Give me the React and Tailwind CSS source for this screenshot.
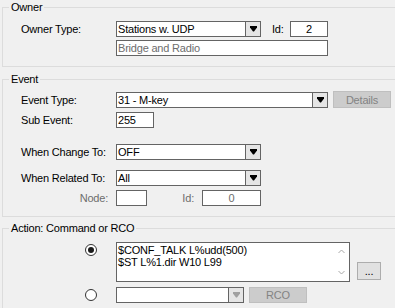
import React from "react";

function Arrow({ color = "#000" }) {
  return (
    <svg width="7" height="6" viewBox="0 0 7 6">
      <polygon points="0,0 7,0 7,1.5 4,5.5 3,5.5 0,1.5" fill={color} />
    </svg>
  );
}

function Combo({ width, text, disabled }) {
  return (
    <div className={`flex h-[16px] border border-[#646464] bg-white ${width}`}>
      <span className="flex-1 pl-[1px] leading-[14px] whitespace-nowrap overflow-hidden">{text}</span>
      <div className="w-[15px] border-l border-[#646464] bg-[#e5e5e5] flex items-center justify-center">
        <Arrow color={disabled ? "#a0a0a0" : "#000"} />
      </div>
    </div>
  );
}

function Box({ width, children, extra = "" }) {
  return (
    <div className={`flex h-[16px] border border-[#646464] bg-white leading-[14px] px-[1px] whitespace-nowrap ${width} ${extra}`}>
      {children}
    </div>
  );
}

function Radio({ checked }) {
  return (
    <div className="mt-[2px] ml-[82px] w-[12px] h-[12px] rounded-full border border-[#333333] bg-white flex items-center justify-center shrink-0">
      {checked ? <div className="w-[6px] h-[6px] rounded-full bg-[#1a1a1a]" /> : null}
    </div>
  );
}

function Label({ children }) {
  return <span className="ml-[18px] w-[95px] shrink-0 leading-[14px]">{children}</span>;
}

export default function App() {
  return (
    <div className="w-[395px] h-[308px] overflow-hidden bg-[#f0f0f0] text-[11px] leading-[14px] text-black font-['Liberation_Sans',Arial,sans-serif] tracking-[-0.2px]">
      {/* Owner */}
      <fieldset className="ml-[2px] w-[420px] border border-[#dcdcdc] pb-[10px]">
        <legend className="ml-[6px] px-[2px] leading-[14px]">Owner</legend>
        <div className="mt-[7px] flex items-center h-[16px]">
          <Label>Owner Type:</Label>
          <Combo width="w-[145px]" text="Stations w. UDP" />
          <span className="ml-[11px] w-[18px]">Id:</span>
          <Box width="w-[38px]" extra="justify-center">2</Box>
        </div>
        <div className="mt-[3px] ml-[113px]">
          <Box width="w-[212px]" extra="text-[#6d6d6d]">Bridge and Radio</Box>
        </div>
      </fieldset>

      {/* Event */}
      <fieldset className="mt-[5px] ml-[2px] w-[420px] border border-[#dcdcdc] pb-[10px]">
        <legend className="ml-[6px] px-[2px] leading-[14px]">Event</legend>
        <div className="mt-[6px] flex items-center h-[16px]">
          <Label>Event Type:</Label>
          <Combo width="w-[212px]" text="31 - M-key" />
          <div className="ml-[5px] -mt-[1px] w-[58px] h-[17px] border border-[#bfbfbf] bg-[#cccccc] text-[#838383] flex items-center justify-center">
            Details
          </div>
        </div>
        <div className="mt-[4px] flex items-center h-[16px]">
          <Label>Sub Event:</Label>
          <Box width="w-[38px]">255</Box>
        </div>
        <div className="mt-[16px] flex items-center h-[16px]">
          <Label>When Change To:</Label>
          <Combo width="w-[145px]" text="OFF" />
        </div>
        <div className="mt-[10px] flex items-center h-[16px]">
          <Label>When Related To:</Label>
          <Combo width="w-[145px]" text="All" />
        </div>
        <div className="mt-[4px] flex items-center h-[16px]">
          <span className="ml-[18px] w-[95px] pr-[8px] text-right text-[#6d6d6d]">Node:</span>
          <Box width="w-[31px]" />
          <span className="w-[55px] pr-[8px] text-right text-[#6d6d6d]">Id:</span>
          <Box width="w-[59px]" extra="justify-center text-[#6d6d6d]">0</Box>
        </div>
      </fieldset>

      {/* Action */}
      <fieldset className="mt-[4px] ml-[2px] w-[420px] border border-[#dcdcdc] pb-[10px]">
        <legend className="ml-[6px] px-[2px] leading-[14px]">Action: Command or RCO</legend>
        <div className="mt-[7px] flex items-start">
          <Radio checked />
          <div className="ml-[19px] w-[234px] h-[40px] border border-[#646464] bg-white flex">
            <div className="flex-1 pl-[1px] pt-[1px] leading-[12px] whitespace-nowrap">
              <div>$CONF_TALK L%udd(500)</div>
              <div>$ST L%1.dir W10 L99</div>
            </div>
            <div className="w-[16px] flex flex-col items-center justify-between py-[6px]">
              <svg width="7" height="5" viewBox="0 0 7 5">
                <polyline points="0.5,4 3.5,1 6.5,4" fill="none" stroke="#a8a8a8" strokeWidth="1" />
              </svg>
              <svg width="7" height="5" viewBox="0 0 7 5">
                <polyline points="0.5,1 3.5,4 6.5,1" fill="none" stroke="#a8a8a8" strokeWidth="1" />
              </svg>
            </div>
          </div>
          <div className="ml-[7px] mt-[20px] w-[24px] h-[18px] border border-[#adadad] bg-[#e1e1e1] flex items-center justify-center leading-[14px]">
            ...
          </div>
        </div>
        <div className="mt-[5px] flex items-start">
          <Radio />
          <div className="ml-[19px]">
            <Combo width="w-[128px]" text="" disabled />
          </div>
          <div className="ml-[5px] w-[58px] h-[16px] border border-[#bfbfbf] bg-[#cccccc] text-[#838383] flex items-center justify-center">
            RCO
          </div>
        </div>
      </fieldset>
    </div>
  );
}
